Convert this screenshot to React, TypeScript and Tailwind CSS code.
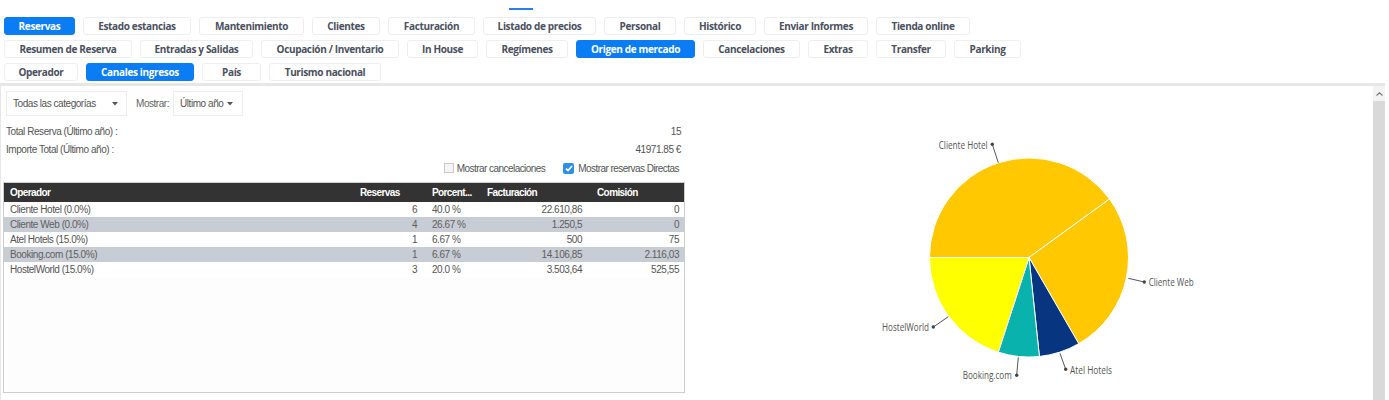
import React from 'react';

type Tab = { label: string; w: string; active?: boolean };

// pestañas de informes (anchos fijos para cuadrar con la maqueta)
const tabRows: Tab[][] = [
  [
    { label: 'Reservas', w: 'w-[71px]', active: true },
    { label: 'Estado estancias', w: 'w-[108px]' },
    { label: 'Mantenimiento', w: 'w-[105px]' },
    { label: 'Clientes', w: 'w-[68px]' },
    { label: 'Facturación', w: 'w-[87px]' },
    { label: 'Listado de precios', w: 'w-[113px]' },
    { label: 'Personal', w: 'w-[72px]' },
    { label: 'Histórico', w: 'w-[72px]' },
    { label: 'Enviar Informes', w: 'w-[104px]' },
    { label: 'Tienda online', w: 'w-[94px]' },
  ],
  [
    { label: 'Resumen de Reserva', w: 'w-[128px]' },
    { label: 'Entradas y Salidas', w: 'w-[113px]' },
    { label: 'Ocupación / Inventario', w: 'w-[138px]' },
    { label: 'In House', w: 'w-[71px]' },
    { label: 'Regímenes', w: 'w-[82px]' },
    { label: 'Origen de mercado', w: 'w-[119px]', active: true },
    { label: 'Cancelaciones', w: 'w-[97px]' },
    { label: 'Extras', w: 'w-[60px]' },
    { label: 'Transfer', w: 'w-[70px]' },
    { label: 'Parking', w: 'w-[67px]' },
  ],
  [
    { label: 'Operador', w: 'w-[74px]' },
    { label: 'Canales ingresos', w: 'w-[108px]', active: true },
    { label: 'País', w: 'w-[59px]' },
    { label: 'Turismo nacional', w: 'w-[112px]' },
  ],
];

const rows = [
  { op: 'Cliente Hotel (0.0%)', res: 6, pct: '40.0 %', fact: '22.610,86', com: '0' },
  { op: 'Cliente Web (0.0%)', res: 4, pct: '26.67 %', fact: '1.250,5', com: '0' },
  { op: 'Atel Hotels (15.0%)', res: 1, pct: '6.67 %', fact: '500', com: '75' },
  { op: 'Booking.com (15.0%)', res: 1, pct: '6.67 %', fact: '14.106,85', com: '2.116,03' },
  { op: 'HostelWorld (15.0%)', res: 3, pct: '20.0 %', fact: '3.503,64', com: '525,55' },
];

const slices = [
  { name: 'Cliente Hotel', value: 6, color: '#ffc800' },
  { name: 'Cliente Web', value: 4, color: '#ffc800' },
  { name: 'Atel Hotels', value: 1, color: '#08357f' },
  { name: 'Booking.com', value: 1, color: '#0ab2ad' },
  { name: 'HostelWorld', value: 3, color: '#ffff00' },
];

// etiquetas: línea conectora, punto y texto (coordenadas del svg)
const labels = [
  { text: 'Cliente Hotel', from: [312.3, 76.7], to: [306.3, 58.3], x: 301.7, y: 62.5, anchor: 'end', len: 49 },
  { text: 'Cliente Web', from: [442.3, 192.3], to: [458.3, 196], x: 462.7, y: 199.5, anchor: 'start', len: 45 },
  { text: 'HostelWorld', from: [262.3, 230.7], to: [247.3, 241], x: 243, y: 244.5, anchor: 'end', len: 47 },
  { text: 'Booking.com', from: [332.3, 271.3], to: [330.7, 289.3], x: 325.7, y: 292.8, anchor: 'end', len: 49 },
  { text: 'Atel Hotels', from: [374, 267.3], to: [379.7, 283.3], x: 384, y: 287.5, anchor: 'start', len: 42 },
];

function TabButton({ tab }: { tab: Tab }) {
  return (
    <div
      className={`${tab.w} flex h-[18px] items-center justify-center rounded-[3px] border font-['Open_Sans',sans-serif] text-[10px] font-bold tracking-[-0.35px] ${
        tab.active ? 'border-[#0b7df4] bg-[#0b7df4] text-white' : 'border-[#eceef1] bg-white text-[#4a505e]'
      }`}
    >
      {tab.label}
    </div>
  );
}

function Caret() {
  return (
    <svg width="6" height="4" viewBox="0 0 6 4">
      <path d="M0 0 L6 0 L3 3.5 Z" fill="#555" />
    </svg>
  );
}

function PieChart() {
  const cx = 343;
  const cy = 171.5;
  const r = 99.5;
  const total = slices.reduce((s, x) => s + x.value, 0);
  const pt = (a: number) => {
    const rad = (a * Math.PI) / 180;
    return [cx + r * Math.cos(rad), cy + r * Math.sin(rad)];
  };
  let start = 180;
  const paths = slices.map((s) => {
    const sweep = (s.value / total) * 360;
    const [x1, y1] = pt(start);
    const [x2, y2] = pt(start + sweep);
    start += sweep;
    return {
      ...s,
      d: `M${cx} ${cy} L${x1} ${y1} A${r} ${r} 0 ${sweep > 180 ? 1 : 0} 1 ${x2} ${y2} Z`,
    };
  });

  return (
    <svg width="687" height="314" viewBox="0 0 687 314">
      {paths.map((p) => (
        <path key={p.name} d={p.d} fill={p.color} stroke="#fff" strokeWidth="1" strokeLinejoin="round" />
      ))}
      {labels.map((l) => (
        <g key={l.text}>
          <line x1={l.from[0]} y1={l.from[1]} x2={l.to[0]} y2={l.to[1]} stroke="#555" strokeWidth="1" />
          <circle cx={l.to[0]} cy={l.to[1]} r="1.7" fill="#444" />
          <text
            x={l.x}
            y={l.y}
            textAnchor={l.anchor as 'start' | 'end'}
            textLength={l.len}
            lengthAdjust="spacingAndGlyphs"
            fontFamily="'Open Sans', sans-serif"
            fontSize="10"
            fill="#555"
          >
            {l.text}
          </text>
        </g>
      ))}
    </svg>
  );
}

export default function App() {
  return (
    <div className="h-[400px] w-[1389px] overflow-hidden bg-white font-['Liberation_Sans',Arial,sans-serif] text-[10px] text-[#555]">
      {/* indicador del menú superior */}
      <div className="h-[8px]" />
      <div className="ml-[509px] h-[2px] w-[24px] bg-[#2b7de9]" />

      {/* pestañas */}
      <div className="mt-[7px] flex flex-col gap-y-[5px] pl-[4px]">
        {tabRows.map((row, i) => (
          <div key={i} className="flex gap-2">
            {row.map((t) => (
              <TabButton key={t.label} tab={t} />
            ))}
          </div>
        ))}
      </div>

      {/* panel del informe */}
      <section className="mr-[4px] mt-[2px] flex h-[317px] border-l border-t-[3px] border-[#e7e7e7]">
        <div className="w-[685px] shrink-0 pl-[2px] tracking-[-0.45px]">
          <div className="mt-[5px] flex h-[25px] items-center pl-[3px]">
            <div className="flex h-[25px] w-[121px] items-center justify-between border border-[#ececec] pl-[6px] pr-[8px]">
              <span>Todas las categorías</span>
              <Caret />
            </div>
            <span className="ml-[9px] text-[#666]">Mostrar:</span>
            <div className="ml-[4px] flex h-[25px] w-[70px] items-center justify-between border border-[#ececec] pl-[6px] pr-[9px]">
              <span>Último año</span>
              <Caret />
            </div>
          </div>

          <div className="mt-[6px] w-[682px] pl-[3px] pr-[4px]">
            <div className="flex h-[18px] items-center justify-between">
              <span>Total Reserva (Último año) :</span>
              <span>15</span>
            </div>
            <div className="flex h-[18px] items-center justify-between">
              <span>Importe Total (Último año) :</span>
              <span>41971.85 €</span>
            </div>
            <div className="flex h-[20px] items-center justify-end pr-[2px] tracking-[-0.55px]">
              <span className="h-[10px] w-[10px] border border-[#c9c9c9] bg-[#f4f4f4]" />
              <span className="ml-[3px]">Mostrar cancelaciones</span>
              <span className="ml-[18px] flex h-[11px] w-[11px] items-center justify-center rounded-[2px] bg-[#2f8ee6]">
                <svg width="8" height="7" viewBox="0 0 8 7">
                  <path d="M1 3.6 L3 5.6 L7 1" fill="none" stroke="#fff" strokeWidth="1.6" />
                </svg>
              </span>
              <span className="ml-[4px]">Mostrar reservas Directas</span>
            </div>
          </div>

          {/* tabla de operadores */}
          <div className="mt-[4px] h-[211px] w-[682px] border border-[#cdcdcd] bg-[#fdfdfd]">
            <div className="grid h-[19px] grid-cols-[349px_72px_55px_110px_94px] items-center bg-[#333] font-bold tracking-[-0.6px] text-white">
              <span className="pl-[6px]">Operador</span>
              <span className="pl-[7px]">Reservas</span>
              <span className="pl-[7px]">Porcent...</span>
              <span className="pl-[7px]">Facturación</span>
              <span className="pl-[7px]">Comisión</span>
            </div>
            {rows.map((r, i) => (
              <div
                key={r.op}
                className={`grid h-[15px] grid-cols-[349px_72px_55px_110px_94px] items-center ${
                  i % 2 === 1 ? 'bg-[#c8ccd4] text-[#606060]' : 'bg-white'
                }`}
              >
                <span className="pl-[6px]">{r.op}</span>
                <span className="pr-[8px] text-right">{r.res}</span>
                <span className="pl-[7px]">{r.pct}</span>
                <span className="pr-[8px] text-right">{r.fact}</span>
                <span className="pr-[5px] text-right">{r.com}</span>
              </div>
            ))}
          </div>
        </div>

        <div className="flex-1">
          <PieChart />
        </div>

        {/* barra de desplazamiento */}
        <div className="flex w-[12px] shrink-0 flex-col">
          <div className="flex h-[15px] items-center justify-center bg-[#f3f3f3]">
            <svg width="7" height="4" viewBox="0 0 7 4">
              <path d="M0.5 3.5 L3.5 0.8 L6.5 3.5" fill="none" stroke="#777" strokeWidth="1.1" />
            </svg>
          </div>
          <div className="flex-1 bg-[#d9d9d9]" />
        </div>
      </section>
    </div>
  );
}
